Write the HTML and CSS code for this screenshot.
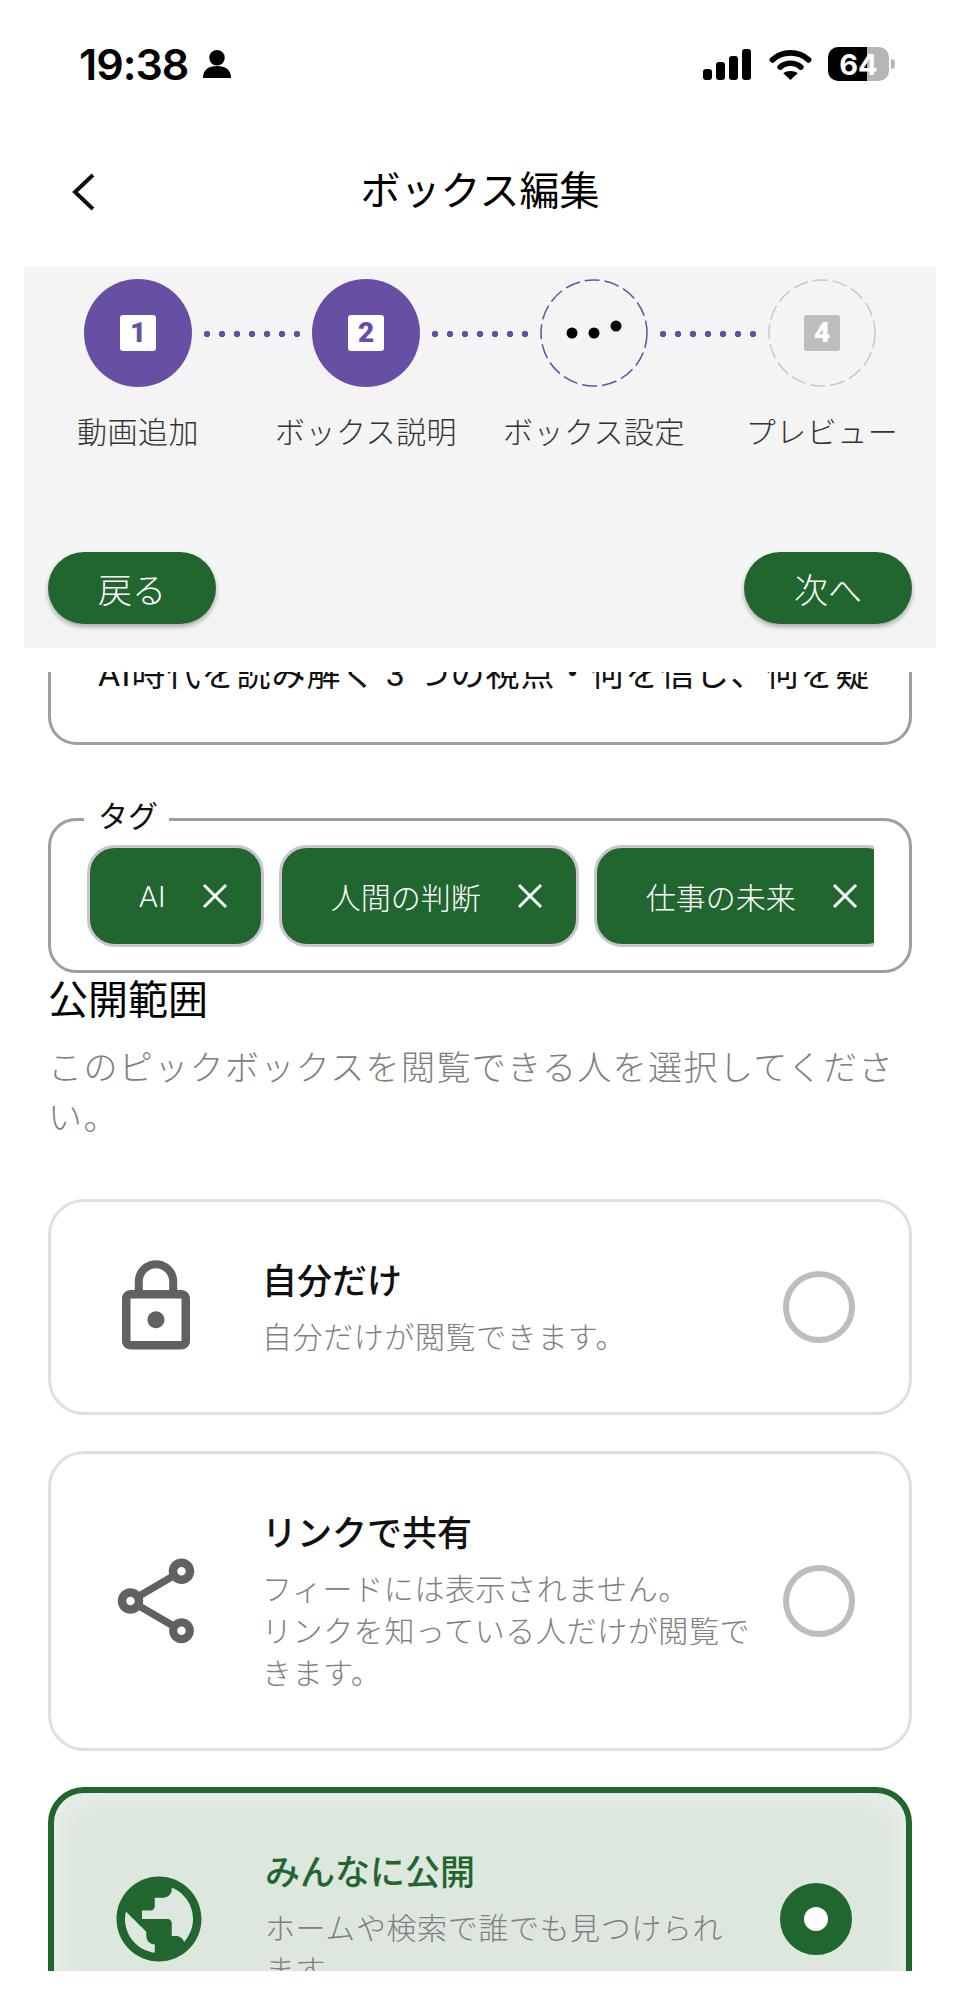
FILE: index.html
```html
<!DOCTYPE html>
<html lang="ja">
<head>
  <meta charset="UTF-8" />
  <title>ボックス編集</title>
  <link rel="stylesheet" href="styles.css">
</head>
<body>
  <!-- Status bar -->
  <div class="status-bar">
    <div class="status-left">
      <span class="clock">19:38</span>
      <svg class="person" viewBox="0 0 29 29" width="28" height="28"><circle cx="14.5" cy="8" r="8" fill="#000"/><path d="M0 29c0-9 6-12.500 14.500-12.500S29 20 29 29z" fill="#000"/></svg>
    </div>
    <div class="status-right">
      <svg class="signal" viewBox="0 0 48 31" width="48" height="31"><rect x="0" y="20" width="9" height="11" rx="3"/><rect x="13" y="13" width="9" height="18" rx="3"/><rect x="26" y="7" width="9" height="24" rx="3"/><rect x="39" y="0" width="9" height="31" rx="3"/></svg>
      <svg viewBox="0 0 41 31" width="43" height="32"><path d="M3 11.500C12.500 2.500 28.500 2.500 38 11.500" fill="none" stroke="#000" stroke-width="5.500" stroke-linecap="round"/><path d="M10.500 18.500C16 13.500 25 13.500 30.500 18.500" fill="none" stroke="#000" stroke-width="5.500" stroke-linecap="round"/><path d="M13.500 24.500C17 21.500 24 21.500 27.500 24.500L20.500 31z" fill="#000"/></svg>
      <div class="battery">
        <div class="battery-body"><span>64</span></div>
        <div class="battery-tip"></div>
      </div>
    </div>
  </div>

  <!-- Header -->
  <div class="nav-bar">
    <svg class="back" viewBox="0 0 24 38" width="24" height="38"><polyline points="21,2 3,19 21,36" fill="none" stroke="#111" stroke-width="4"/></svg>
    <h1>ボックス編集</h1>
  </div>

  <!-- Stepper -->
  <div class="stepper">
    <div class="step-row">
      <div class="step done"><span class="badge">1</span></div>
      <div class="dots"></div>
      <div class="step done"><span class="badge">2</span></div>
      <div class="dots"></div>
      <div class="step">
        <svg viewBox="0 0 108 108" width="108" height="108">
          <circle cx="54" cy="54" r="53" fill="none" stroke="#674fa3" stroke-width="1.500" stroke-dasharray="15 5"/>
          <circle cx="32" cy="54" r="5.500"/><circle cx="54" cy="54" r="5.500"/><circle cx="76" cy="47" r="5.500"/>
        </svg>
      </div>
      <div class="dots"></div>
      <div class="step">
        <svg class="step-ring" viewBox="0 0 108 108" width="108" height="108">
          <circle cx="54" cy="54" r="53" fill="none" stroke="#c8c8c8" stroke-width="1.500" stroke-dasharray="15 5"/>
        </svg>
        <span class="badge badge-off">4</span>
      </div>
    </div>
    <div class="label-row">
      <div>動画追加</div>
      <div>ボックス説明</div>
      <div>ボックス設定</div>
      <div>プレビュー</div>
    </div>
    <div class="step-actions">
      <button class="pill">戻る</button>
      <button class="pill">次へ</button>
    </div>
  </div>

  <!-- Form -->
  <div class="form">
    <div class="title-field">
      <div class="title-text">AI時代を読み解く 3 つの視点・何を信じ、何を疑う</div>
    </div>

    <fieldset class="tags">
      <legend>タグ</legend>
      <div class="tag-list">
        <div class="tag">AI <svg viewBox="0 0 26 26" width="26" height="26"><path d="M2 2L24 24M24 2L2 24" stroke="#fff" stroke-width="3"/></svg></div>
        <div class="tag">人間の判断 <svg viewBox="0 0 26 26" width="26" height="26"><path d="M2 2L24 24M24 2L2 24" stroke="#fff" stroke-width="3"/></svg></div>
        <div class="tag">仕事の未来 <svg viewBox="0 0 26 26" width="26" height="26"><path d="M2 2L24 24M24 2L2 24" stroke="#fff" stroke-width="3"/></svg></div>
      </div>
    </fieldset>

    <h2>公開範囲</h2>
    <p class="hint">このピックボックスを閲覧できる人を選択してください。</p>

    <div class="option">
      <svg class="option-icon" viewBox="0 0 24 24"><path d="M12 17c1.100 0 2-.9 2-2s-.9-2-2-2-2 .9-2 2 .9 2 2 2zm6-9h-1V6c0-2.760-2.240-5-5-5S7 3.240 7 6v2H6c-1.100 0-2 .9-2 2v10c0 1.100.9 2 2 2h12c1.100 0 2-.9 2-2V10c0-1.100-.9-2-2-2zM8.900 6c0-1.710 1.390-3.100 3.100-3.100s3.100 1.390 3.100 3.100v2H8.900V6zM18 20H6V10h12v10z"/></svg>
      <div class="option-text">
        <div class="option-title">自分だけ</div>
        <div class="option-desc">自分だけが閲覧できます。</div>
      </div>
      <div class="radio"></div>
    </div>

    <div class="option">
      <svg class="option-icon" viewBox="0 0 24 24"><path d="M18 16.080c-.76 0-1.440.3-1.960.77L8.910 12.700c.05-.23.09-.46.09-.7s-.04-.47-.09-.7l7.050-4.110c.54.5 1.250.81 2.040.81 1.660 0 3-1.340 3-3s-1.340-3-3-3-3 1.340-3 3c0 .24.04.47.09.7L8.040 9.810C7.500 9.310 6.790 9 6 9c-1.660 0-3 1.340-3 3s1.340 3 3 3c.79 0 1.500-.31 2.040-.81l7.120 4.160c-.05.21-.08.43-.08.65 0 1.610 1.310 2.920 2.920 2.920s2.920-1.310 2.920-2.920-1.310-2.920-2.920-2.920zM18 4c.55 0 1 .45 1 1s-.45 1-1 1-1-.45-1-1 .45-1 1-1zM6 13c-.55 0-1-.45-1-1s.45-1 1-1 1 .45 1 1-.45 1-1 1zm12 7.020c-.55 0-1-.45-1-1s.45-1 1-1 1 .45 1 1-.45 1-1 1z"/></svg>
      <div class="option-text">
        <div class="option-title">リンクで共有</div>
        <div class="option-desc">フィードには表示されません。<br>リンクを知っている人だけが閲覧できます。</div>
      </div>
      <div class="radio"></div>
    </div>

    <div class="option selected">
      <svg class="option-icon" viewBox="0 0 24 24"><path d="M12 2C6.480 2 2 6.480 2 12s4.480 10 10 10 10-4.480 10-10S17.520 2 12 2zm-1 17.930c-3.950-.49-7-3.850-7-7.930 0-.62.08-1.210.21-1.790L9 15v1c0 1.100.9 2 2 2v1.930zm6.900-2.540c-.26-.81-1-1.390-1.900-1.390h-1v-3c0-.55-.45-1-1-1H8v-2h2c.55 0 1-.45 1-1V7h2c1.100 0 2-.9 2-2v-.41c2.930 1.190 5 4.060 5 7.410 0 2.080-.8 3.970-2.100 5.390z"/></svg>
      <div class="option-text">
        <div class="option-title">みんなに公開</div>
        <div class="option-desc">ホームや検索で誰でも見つけられます。</div>
      </div>
      <div class="radio"></div>
    </div>
  </div>
</body>
</html>
```

FILE: styles.css
```css
body {
  margin: 0;
  height: 1995px;
  overflow: hidden;
  background: #fff;
  font-family: Roboto, "Noto Sans CJK JP", sans-serif;
  color: #111;
}

/* Status bar */
.status-bar {
  height: 128px;
  display: flex;
  align-items: center;
  justify-content: space-between;
  padding: 0 65px 0 79px;
}

.status-left {
  display: flex;
  align-items: center;
  gap: 15px;
}

.clock {
  font-family: Inter, sans-serif;
  font-size: 43px;
  font-weight: 600;
  letter-spacing: -1px;
  color: #000;
}

.status-right {
  display: flex;
  align-items: center;
  gap: 16px;
}

.signal {
  margin-right: 2px;
}

.battery {
  display: flex;
  align-items: center;
  gap: 2px;
}

.battery-body {
  width: 61px;
  height: 34px;
  border-radius: 10px;
  background: linear-gradient(90deg, #000 64%, #b6b6b6 64%);
  display: flex;
  align-items: center;
  justify-content: center;
  color: #fff;
  font-family: Inter, sans-serif;
  font-size: 29px;
  font-weight: 700;
}

.battery-tip {
  width: 4px;
  height: 10px;
  border-radius: 0 4px 4px 0;
  background: #b6b6b6;
}

/* Header */
.nav-bar {
  height: 128px;
  display: flex;
  align-items: center;
  justify-content: center;
  position: relative;
  margin-bottom: 11px;
}

.nav-bar h1 {
  margin: 0;
  font-size: 40px;
  font-weight: 400;
  line-height: 48px;
  color: #000;
}

.back {
  position: absolute;
  left: 72px;
  top: 45px;
}

/* Stepper */
.stepper {
  margin: 0 24px;
  padding: 12px 0 24px;
  background: #f4f4f4;
}

.step-row {
  display: flex;
  align-items: center;
  padding: 0 60px;
}

.step {
  width: 108px;
  height: 108px;
  border-radius: 50%;
  flex-shrink: 0;
  display: flex;
  align-items: center;
  justify-content: center;
  position: relative;
}

.step.done {
  background: #674fa3;
}

.step-ring {
  position: absolute;
  left: 0;
  top: 0;
}

.badge {
  width: 36px;
  height: 36px;
  border-radius: 3px;
  background: #fff;
  color: #674fa3;
  font-family: Roboto, sans-serif;
  font-size: 28px;
  font-weight: 900;
  line-height: 36px;
  text-align: center;
}

.badge-off {
  background: #bdbdbd;
  color: #fff;
}

.dots {
  width: 96px;
  height: 6px;
  margin: 2px 12px 0;
  background: radial-gradient(circle at 3px 3px, #674fa3 3px, transparent 3.5px) 0 0 / 15px 6px repeat-x;
}

.label-row {
  display: grid;
  grid-template-columns: repeat(4, 1fr);
  margin-top: 26px;
  text-align: center;
  font-size: 30px;
  font-weight: 300;
  letter-spacing: 0.5px;
  line-height: 40px;
  color: #333;
}

.step-actions {
  display: flex;
  justify-content: space-between;
  margin-top: 99px;
  padding: 0 24px;
}

.pill {
  width: 168px;
  height: 72px;
  border: none;
  border-radius: 36px;
  background: #22662f;
  color: #fff;
  font-family: inherit;
  font-size: 34px;
  font-weight: 300;
  padding: 0;
  box-shadow: 0 3px 5px rgba(0,0,0,0.3);
}

/* Form */
.form {
  height: 1299px;
  margin-top: 24px;
  padding: 0 48px;
  overflow: hidden;
}

.title-field {
  height: 70px;
  border: 3px solid #9e9e9e;
  border-top: none;
  border-radius: 0 0 28px 28px;
  overflow: hidden;
}

.title-text {
  width: 770px;
  margin: -18px 0 0 47px;
  overflow: hidden;
  white-space: nowrap;
  font-size: 34px;
  letter-spacing: 1px;
  line-height: 40px;
}

.tags {
  margin: 52px 0 0;
  padding: 4px 35px 23px 36px;
  border: 3px solid #9e9e9e;
  border-radius: 28px;
  min-width: 0;
}

.tags legend {
  margin-left: -3px;
  padding: 0 11px 4px 14px;
  font-size: 30px;
  line-height: 40px;
}

.tag-list {
  display: flex;
  gap: 15px;
  overflow: hidden;
}

.tag {
  flex-shrink: 0;
  height: 102px;
  box-sizing: border-box;
  border: 3px solid #cac4d0;
  border-radius: 28px;
  background: #22662f;
  color: #fff;
  display: flex;
  align-items: center;
  gap: 36px;
  padding: 0 33px 0 49px;
  font-size: 30px;
  font-weight: 300;
}

h2 {
  margin: 5px 0 0;
  font-size: 40px;
  font-weight: 400;
  line-height: 45px;
  color: #000;
}

.hint {
  margin: 20px 0 56px;
  font-size: 34px;
  font-weight: 300;
  letter-spacing: 1.4px;
  line-height: 50px;
  color: #808080;
}

/* Options */
.option {
  display: flex;
  align-items: center;
  border: 3px solid #e0e0e0;
  border-radius: 36px;
  padding: 53.5px 47px 53.5px 54px;
  margin-bottom: 36px;
}

.option-icon {
  width: 102px;
  height: 102px;
  flex-shrink: 0;
  fill: #616161;
}

.option-text {
  flex: 1;
  margin: 0 22px 0 55px;
}

.option-title {
  font-size: 35px;
  font-weight: 500;
  line-height: 54px;
}

.option-desc {
  margin-top: 7px;
  font-size: 30px;
  font-weight: 300;
  letter-spacing: 0.6px;
  line-height: 42px;
  color: #808080;
}

.radio {
  width: 72px;
  height: 72px;
  margin: 0 7px;
  box-sizing: border-box;
  border: 6px solid #bdbdbd;
  border-radius: 50%;
  flex-shrink: 0;
}

.option.selected {
  border: 6px solid #22662f;
  background: #dde7de;
  box-shadow: inset 0 0 36px rgba(255,255,255,0.5);
}

.selected .option-icon {
  fill: #22662f;
}

.selected .option-title {
  color: #22662f;
}

.selected .radio {
  border: 24px solid #22662f;
  background: #fff;
}
```
